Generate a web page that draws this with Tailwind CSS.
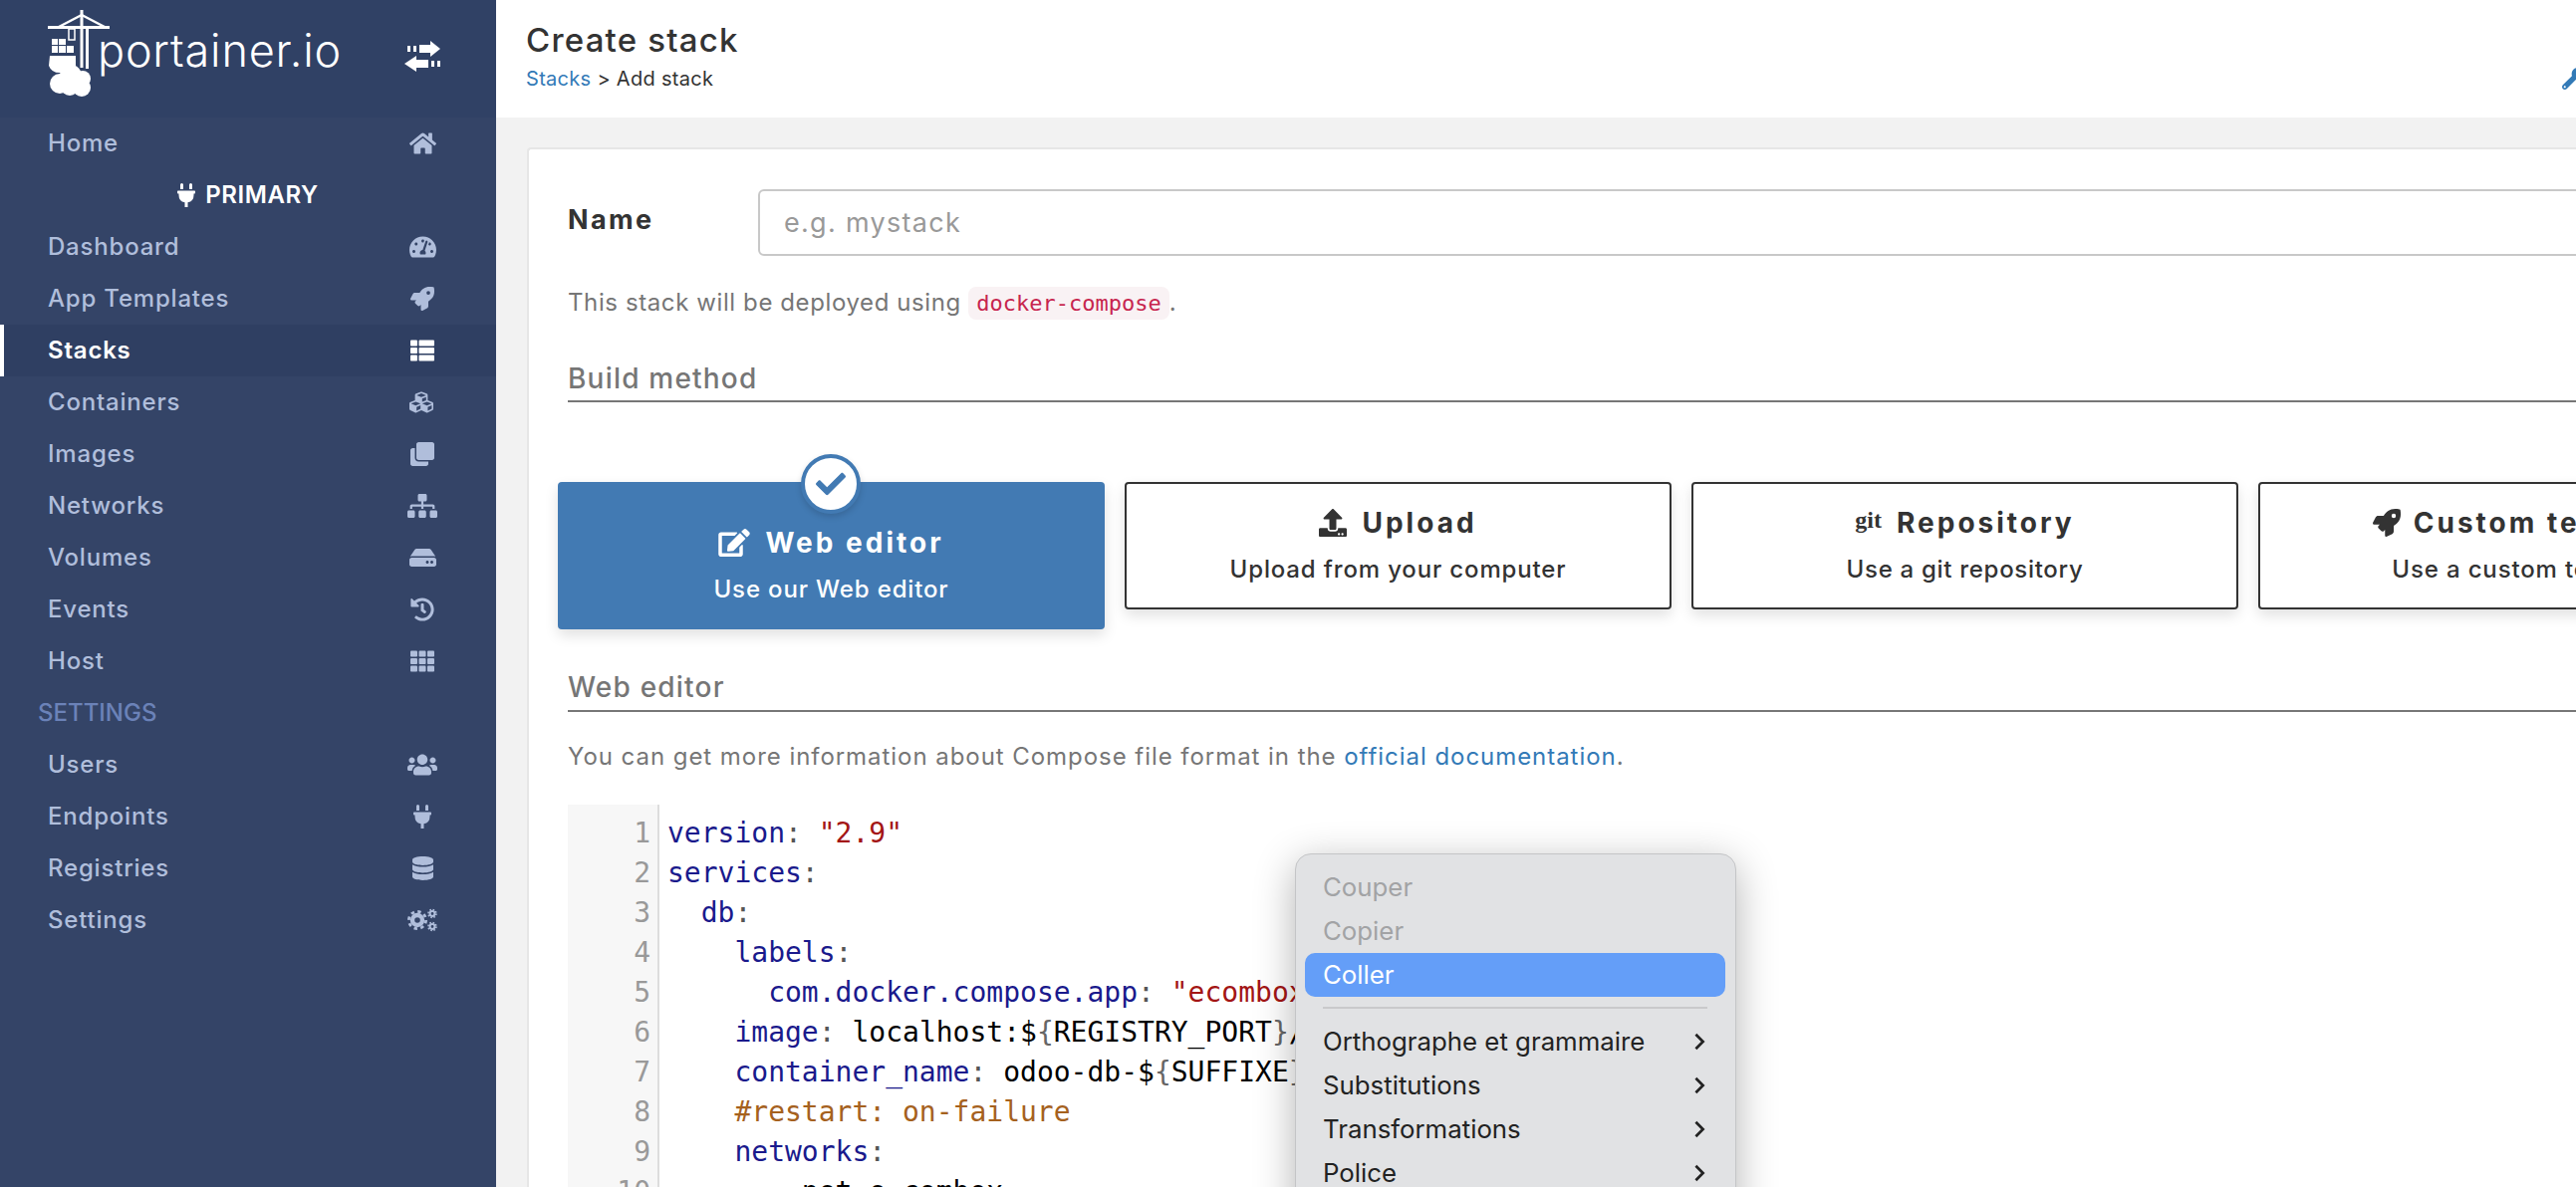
<!DOCTYPE html>
<html>
<head>
  <meta charset="UTF-8">
  <title>Create stack</title>
  <script src="https://cdn.jsdelivr.net/npm/@tailwindcss/browser@4"></script>
</head>
<body class="bg-[#f2f2f2]">
<div class="relative flex w-[2586px] h-[1192px] overflow-hidden font-['Inter',sans-serif]">

  <!-- sidebar -->
  <aside class="w-[498px] shrink-0 bg-[#344467] text-[#b0bedb] text-[24px] font-medium tracking-[0.8px]">
    <div class="flex h-[118px] bg-[#304165] text-white">
      <svg class="w-[70px] h-[100px] ml-[44px] shrink-0" viewBox="44 0 70 100" fill="#fff">
        <rect x="80.5" y="10" width="3" height="58"/>
        <rect x="86" y="27" width="3" height="42"/>
        <rect x="48" y="26" width="62" height="3"/>
        <path d="M82 15 L59 27 M82 15 L105 27" stroke="#fff" stroke-width="2.5"/>
        <rect x="69" y="29" width="6" height="11" fill="none" stroke="#fff" stroke-width="1.5"/>
        <path d="M52 39h6v6h-6zM59 39h7v6h-7zM52 46h6v7h-6zM59 46h7v7h-7zM67 46h7v7h-7z"/>
        <path d="M50 56 H76 V66 Q70 72 62 73 Q52 74 49 66 Z"/>
        <circle cx="60" cy="84" r="10"/><circle cx="71" cy="76" r="11"/><circle cx="83" cy="79" r="8"/><circle cx="82" cy="88" r="9"/><circle cx="70" cy="87" r="9"/>
      </svg>
      <span class="mt-[21px] -ml-[16px] text-[45px] leading-[60px] font-light tracking-[0.8px]">portainer.io</span>
      <svg class="w-[36px] h-[32px] ml-auto mr-[56px] mt-[40px]" viewBox="0 0 36 32" fill="#fff">
        <rect x="3" y="6" width="3" height="6"/><rect x="9" y="6" width="3" height="6"/><path d="M15 5H26V1L36 9L26 17V13H15Z"/>
        <rect x="33" y="21" width="3" height="6"/><rect x="27" y="21" width="3" height="6"/><path d="M24 20H12V16L0 24L12 32V28H24Z"/>
      </svg>
    </div>

    <nav>
      <a class="flex items-center h-[52px] pl-[48px] pr-[50px] justify-between"><span>Home</span>
        <span class="flex justify-center w-[48px]"><svg class="w-[27px] h-[24px] fill-current" viewBox="0 0 576 512"><path d="M280.37 148.26L96 300.11V464a16 16 0 0 0 16 16l112.06-.29a16 16 0 0 0 15.92-16V368a16 16 0 0 1 16-16h64a16 16 0 0 1 16 16v95.64a16 16 0 0 0 16 16.05L464 480a16 16 0 0 0 16-16V300L295.67 148.26a12.19 12.19 0 0 0-15.3 0zM571.6 251.47L488 182.56V44.05a12 12 0 0 0-12-12h-56a12 12 0 0 0-12 12v72.61L318.47 43a48 48 0 0 0-61 0L4.34 251.47a12 12 0 0 0-1.6 16.9l25.5 31A12 12 0 0 0 45.15 301l235.22-193.74a12.19 12.19 0 0 1 15.3 0L530.9 301a12 12 0 0 0 16.9-1.6l25.5-31a12 12 0 0 0-1.7-16.93z"/></svg></span></a>
      <div class="flex items-center justify-center h-[52px] gap-[10px] text-white font-semibold tracking-[0.6px]">
        <svg class="w-[18px] h-[24px] fill-current" viewBox="0 0 384 512"><path d="M320,32a32,32,0,0,0-64,0v96h64Zm48,128H16A16,16,0,0,0,0,176v32a16,16,0,0,0,16,16H32v32A160.07,160.07,0,0,0,160,412.8V512h64V412.8A160.07,160.07,0,0,0,352,256V224h16a16,16,0,0,0,16-16V176A16,16,0,0,0,368,160ZM128,32a32,32,0,0,0-64,0v96h64Z"/></svg>
        <span>PRIMARY</span>
      </div>
      <a class="flex items-center h-[52px] pl-[48px] pr-[50px] justify-between"><span>Dashboard</span>
        <span class="flex justify-center w-[48px]"><svg class="w-[27px] h-[24px] fill-current" viewBox="0 0 576 512"><path d="M288 32C128.94 32 0 160.94 0 320c0 52.8 14.25 102.26 39.06 144.8 5.61 9.62 16.3 15.2 27.44 15.2h443c11.14 0 21.83-5.58 27.44-15.2C561.75 422.26 576 372.8 576 320c0-159.06-128.94-288-288-288zm0 64c14.71 0 26.58 10.13 30.32 23.65-1.11 2.26-2.64 4.23-3.45 6.67l-9.22 27.67c-5.13 3.49-10.97 6.01-17.64 6.01-17.67 0-32-14.33-32-32S270.33 96 288 96zM96 384c-17.67 0-32-14.33-32-32s14.33-32 32-32 32 14.33 32 32-14.33 32-32 32zm48-160c-17.67 0-32-14.33-32-32s14.33-32 32-32 32 14.33 32 32-14.33 32-32 32zm246.77-72.41l-61.33 184C343.13 347.33 352 364.54 352 384c0 11.72-3.38 22.55-8.88 32H232.88c-5.5-9.45-8.88-20.28-8.88-32 0-33.94 26.5-61.43 59.9-63.59l61.34-184.01c4.17-12.56 17.73-19.45 30.36-15.17 12.57 4.19 19.35 17.79 15.17 30.36zm14.66 57.2l15.52-46.55c3.47-1.29 7.13-2.23 11.05-2.23 17.67 0 32 14.33 32 32s-14.33 32-32 32c-11.38-.01-20.89-6.28-26.57-15.22zM480 384c-17.67 0-32-14.33-32-32s14.33-32 32-32 32 14.33 32 32-14.33 32-32 32z"/></svg></span></a>
      <a class="flex items-center h-[52px] pl-[48px] pr-[50px] justify-between"><span>App Templates</span>
        <span class="flex justify-center w-[48px]"><svg class="w-[24px] h-[24px] fill-current" viewBox="0 0 512 512"><path d="M505.12019,19.09375c-1.18945-5.53125-6.65819-11-12.207-12.1875C460.716,0,435.507,0,410.40747,0,307.17523,0,245.26909,55.20312,199.05238,128H94.83772c-16.34763.01562-35.55658,11.875-42.88664,26.48438L2.51562,253.29688A28.4,28.4,0,0,0,0,264a24.00867,24.00867,0,0,0,24.00582,24H127.81618l-22.47457,22.46875c-11.36521,11.36133-12.99607,32.25781,0,45.25L156.24582,406.625c11.15623,11.1875,32.15619,13.15625,45.27726,0l22.47457-22.46875V488a24.00867,24.00867,0,0,0,24.00581,24,28.55934,28.55934,0,0,0,10.707-2.51562l98.72834-49.39063c14.62888-7.29687,26.50776-26.5,26.50776-42.85937V312.79688c72.59753-46.3125,128.03493-108.40626,128.03493-211.09376C512.07526,76.5,512.07526,51.29688,505.12019,19.09375ZM384.04033,168A40,40,0,1,1,424.05,128,40.02322,40.02322,0,0,1,384.04033,168Z"/></svg></span></a>
      <a class="flex items-center h-[52px] pl-[44px] pr-[50px] justify-between border-l-4 border-white bg-[#2f3f62] text-white font-semibold"><span>Stacks</span>
        <span class="flex justify-center w-[48px]"><svg class="w-[24px] h-[24px] fill-current" viewBox="0 0 512 512"><path d="M149.333 216v80c0 13.255-10.745 24-24 24H24c-13.255 0-24-10.745-24-24v-80c0-13.255 10.745-24 24-24h101.333c13.255 0 24 10.745 24 24zM0 376v80c0 13.255 10.745 24 24 24h101.333c13.255 0 24-10.745 24-24v-80c0-13.255-10.745-24-24-24H24c-13.255 0-24 10.745-24 24zM125.333 32H24C10.745 32 0 42.745 0 56v80c0 13.255 10.745 24 24 24h101.333c13.255 0 24-10.745 24-24V56c0-13.255-10.745-24-24-24zm80 448H488c13.255 0 24-10.745 24-24v-80c0-13.255-10.745-24-24-24H205.333c-13.255 0-24 10.745-24 24v80c0 13.255 10.745 24 24 24zm-24-424v80c0 13.255 10.745 24 24 24H488c13.255 0 24-10.745 24-24V56c0-13.255-10.745-24-24-24H205.333c-13.255 0-24 10.745-24 24zm24 264H488c13.255 0 24-10.745 24-24v-80c0-13.255-10.745-24-24-24H205.333c-13.255 0-24 10.745-24 24v80c0 13.255 10.745 24 24 24z"/></svg></span></a>
      <a class="flex items-center h-[52px] pl-[48px] pr-[50px] justify-between"><span>Containers</span>
        <span class="flex justify-center w-[48px]"><svg class="w-[27px] h-[24px] fill-current" viewBox="0 0 576 512"><path d="M488.6 250.2L392 214V105.5c0-15-9.3-28.4-23.4-33.7l-100-37.5c-8.1-3.1-17.1-3.1-25.3 0l-100 37.5c-14.1 5.3-23.4 18.7-23.4 33.7V214l-96.6 36.2C9.3 255.5 0 268.9 0 283.9V394c0 13.6 7.7 26.1 19.9 32.2l100 50c10.1 5.1 22.1 5.1 32.2 0l103.9-52 103.9 52c10.1 5.1 22.1 5.1 32.2 0l100-50c12.2-6.1 19.9-18.6 19.9-32.2V283.9c0-15-9.3-28.4-23.4-33.7zM358 214.8l-85 31.9v-68.2l85-37v73.3zM154 104.1l102-38.2 102 38.2v.6l-102 41.4-102-41.4v-.6zm84 291.1l-85 42.5v-79.1l85-38.8v75.4zm0-112l-102 41.4-102-41.4v-.6l102-38.2 102 38.2v.6zm240 112l-85 42.5v-79.1l85-38.8v75.4zm0-112l-102 41.4-102-41.4v-.6l102-38.2 102 38.2v.6z"/></svg></span></a>
      <a class="flex items-center h-[52px] pl-[48px] pr-[50px] justify-between"><span>Images</span>
        <span class="flex justify-center w-[48px]"><svg class="w-[24px] h-[24px] fill-current" viewBox="0 0 512 512"><path d="M464 0c26.51 0 48 21.49 48 48v288c0 26.51-21.49 48-48 48H176c-26.51 0-48-21.49-48-48V48c0-26.51 21.49-48 48-48h288M176 416c-44.112 0-80-35.888-80-80V128H48c-26.51 0-48 21.49-48 48v288c0 26.51 21.49 48 48 48h288c26.51 0 48-21.49 48-48v-48H176z"/></svg></span></a>
      <a class="flex items-center h-[52px] pl-[48px] pr-[50px] justify-between"><span>Networks</span>
        <span class="flex justify-center w-[48px]"><svg class="w-[30px] h-[24px] fill-current" viewBox="0 0 640 512"><path d="M128 352H32c-17.67 0-32 14.33-32 32v96c0 17.67 14.33 32 32 32h96c17.67 0 32-14.33 32-32v-96c0-17.67-14.33-32-32-32zm-24-80h192v48h48v-48h192v48h48v-57.59c0-21.17-17.23-38.41-38.41-38.41H344v-64h40c17.67 0 32-14.33 32-32V32c0-17.67-14.33-32-32-32H256c-17.67 0-32 14.33-32 32v96c0 17.67 14.33 32 32 32h40v64H94.41C73.23 224 56 241.23 56 262.41V320h48v-48zm264 80h-96c-17.67 0-32 14.33-32 32v96c0 17.67 14.33 32 32 32h96c17.67 0 32-14.33 32-32v-96c0-17.67-14.33-32-32-32zm240 0h-96c-17.67 0-32 14.33-32 32v96c0 17.67 14.33 32 32 32h96c17.67 0 32-14.33 32-32v-96c0-17.67-14.33-32-32-32z"/></svg></span></a>
      <a class="flex items-center h-[52px] pl-[48px] pr-[50px] justify-between"><span>Volumes</span>
        <span class="flex justify-center w-[48px]"><svg class="w-[27px] h-[24px] fill-current" viewBox="0 0 576 512"><path d="M576 304v96c0 26.51-21.49 48-48 48H48c-26.51 0-48-21.49-48-48v-96c0-26.51 21.49-48 48-48h480c26.51 0 48 21.49 48 48zm-48-80a79.557 79.557 0 0 1 30.777 6.165L462.25 85.374A48.003 48.003 0 0 0 422.311 64H153.689a48 48 0 0 0-39.938 21.374L17.223 230.165A79.557 79.557 0 0 1 48 224h480zm-48 96c-17.673 0-32 14.327-32 32s14.327 32 32 32 32-14.327 32-32-14.327-32-32-32zm-96 0c-17.673 0-32 14.327-32 32s14.327 32 32 32 32-14.327 32-32-14.327-32-32-32z"/></svg></span></a>
      <a class="flex items-center h-[52px] pl-[48px] pr-[50px] justify-between"><span>Events</span>
        <span class="flex justify-center w-[48px]"><svg class="w-[24px] h-[24px] fill-current" viewBox="0 0 512 512"><path d="M504 255.531c.253 136.64-111.18 248.372-247.82 248.468-59.015.042-113.223-20.53-155.822-54.911-11.077-8.94-11.905-25.541-1.839-35.607l11.267-11.267c8.609-8.609 22.353-9.551 31.891-1.984C173.062 425.135 212.781 440 256 440c101.705 0 184-82.311 184-184 0-101.705-82.311-184-184-184-48.814 0-93.149 18.969-126.068 49.932l50.754 50.754c10.08 10.08 2.941 27.314-11.313 27.314H24c-8.837 0-16-7.163-16-16V38.627c0-14.254 17.234-21.393 27.314-11.314l49.372 49.372C129.209 34.136 189.552 8 256 8c136.81 0 247.747 110.78 248 247.531zm-180.912 78.784l9.823-12.63c8.138-10.463 6.253-25.542-4.21-33.679L288 256.349V152c0-13.255-10.745-24-24-24h-16c-13.255 0-24 10.745-24 24v135.651l65.409 50.874c10.463 8.137 25.541 6.253 33.679-4.21z"/></svg></span></a>
      <a class="flex items-center h-[52px] pl-[48px] pr-[50px] justify-between"><span>Host</span>
        <span class="flex justify-center w-[48px]"><svg class="w-[24px] h-[24px] fill-current" viewBox="0 0 512 512"><path d="M149.333 56v80c0 13.255-10.745 24-24 24H24c-13.255 0-24-10.745-24-24V56c0-13.255 10.745-24 24-24h101.333c13.255 0 24 10.745 24 24zm181.334 240v-80c0-13.255-10.745-24-24-24H205.333c-13.255 0-24 10.745-24 24v80c0 13.255 10.745 24 24 24h101.333c13.256 0 24.001-10.745 24.001-24zm32-240v80c0 13.255 10.745 24 24 24H488c13.255 0 24-10.745 24-24V56c0-13.255-10.745-24-24-24H386.667c-13.255 0-24 10.745-24 24zm-32 80V56c0-13.255-10.745-24-24-24H205.333c-13.255 0-24 10.745-24 24v80c0 13.255 10.745 24 24 24h101.333c13.256 0 24.001-10.745 24.001-24zm-205.334 56H24c-13.255 0-24 10.745-24 24v80c0 13.255 10.745 24 24 24h101.333c13.255 0 24-10.745 24-24v-80c0-13.255-10.745-24-24-24zM0 376v80c0 13.255 10.745 24 24 24h101.333c13.255 0 24-10.745 24-24v-80c0-13.255-10.745-24-24-24H24c-13.255 0-24 10.745-24 24zm386.667-56H488c13.255 0 24-10.745 24-24v-80c0-13.255-10.745-24-24-24H386.667c-13.255 0-24 10.745-24 24v80c0 13.255 10.745 24 24 24zm0 160H488c13.255 0 24-10.745 24-24v-80c0-13.255-10.745-24-24-24H386.667c-13.255 0-24 10.745-24 24v80c0 13.255 10.745 24 24 24zM181.333 376v80c0 13.255 10.745 24 24 24h101.333c13.255 0 24-10.745 24-24v-80c0-13.255-10.745-24-24-24H205.333c-13.255 0-24 10.745-24 24z"/></svg></span></a>
      <div class="flex items-center h-[52px] pl-[38px] text-[#6b82b8] tracking-normal">SETTINGS</div>
      <a class="flex items-center h-[52px] pl-[48px] pr-[50px] justify-between"><span>Users</span>
        <span class="flex justify-center w-[48px]"><svg class="w-[30px] h-[24px] fill-current" viewBox="0 0 640 512"><path d="M96 224c35.3 0 64-28.7 64-64s-28.7-64-64-64-64 28.7-64 64 28.7 64 64 64zm448 0c35.3 0 64-28.7 64-64s-28.7-64-64-64-64 28.7-64 64 28.7 64 64 64zm32 32h-64c-17.6 0-33.5 7.1-45.1 18.6 40.3 22.1 68.9 62 75.1 109.4h66c17.7 0 32-14.3 32-32v-32c0-35.3-28.7-64-64-64zm-256 0c61.9 0 112-50.1 112-112S381.9 32 320 32 208 82.1 208 144s50.1 112 112 112zm76.8 32h-8.3c-20.8 10-43.9 16-68.5 16s-47.6-6-68.5-16h-8.3C179.6 288 128 339.6 128 403.2V432c0 26.5 21.5 48 48 48h288c26.5 0 48-21.5 48-48v-28.8c0-63.6-51.6-115.2-115.2-115.2zm-223.7-13.4C161.5 263.1 145.6 256 128 256H64c-35.3 0-64 28.7-64 64v32c0 17.7 14.3 32 32 32h65.9c6.3-47.4 34.9-87.3 75.2-109.4z"/></svg></span></a>
      <a class="flex items-center h-[52px] pl-[48px] pr-[50px] justify-between"><span>Endpoints</span>
        <span class="flex justify-center w-[48px]"><svg class="w-[18px] h-[24px] fill-current" viewBox="0 0 384 512"><path d="M320,32a32,32,0,0,0-64,0v96h64Zm48,128H16A16,16,0,0,0,0,176v32a16,16,0,0,0,16,16H32v32A160.07,160.07,0,0,0,160,412.8V512h64V412.8A160.07,160.07,0,0,0,352,256V224h16a16,16,0,0,0,16-16V176A16,16,0,0,0,368,160ZM128,32a32,32,0,0,0-64,0v96h64Z"/></svg></span></a>
      <a class="flex items-center h-[52px] pl-[48px] pr-[50px] justify-between"><span>Registries</span>
        <span class="flex justify-center w-[48px]"><svg class="w-[21px] h-[24px] fill-current" viewBox="0 0 448 512"><path d="M448 73.143v45.714C448 159.143 347.667 192 224 192S0 159.143 0 118.857V73.143C0 32.857 100.333 0 224 0s224 32.857 224 73.143zM448 176v102.857C448 319.143 347.667 352 224 352S0 319.143 0 278.857V176c48.125 33.143 136.208 48.572 224 48.572S399.874 209.143 448 176zm0 160v102.857C448 479.143 347.667 512 224 512S0 479.143 0 438.857V336c48.125 33.143 136.208 48.572 224 48.572S399.874 369.143 448 336z"/></svg></span></a>
      <a class="flex items-center h-[52px] pl-[48px] pr-[50px] justify-between"><span>Settings</span>
        <span class="flex justify-center w-[48px]"><svg class="w-[30px] h-[24px]" viewBox="0 0 30 24" fill="none" stroke="currentColor">
          <circle cx="10" cy="12" r="5" stroke-width="4.4"/><circle cx="10" cy="12" r="8.6" stroke-width="2.8" stroke-dasharray="3.4 3.35"/>
          <circle cx="25" cy="5.5" r="2.4" stroke-width="2"/><circle cx="25" cy="5.5" r="4" stroke-width="1.6" stroke-dasharray="1.6 1.54"/>
          <circle cx="25" cy="18.5" r="2.4" stroke-width="2"/><circle cx="25" cy="18.5" r="4" stroke-width="1.6" stroke-dasharray="1.6 1.54"/>
        </svg></span></a>
    </nav>
  </aside>

  <!-- main -->
  <main class="flex-1 min-w-0 text-[#333]">
    <header class="flex h-[118px] bg-white pl-[30px]">
      <div class="pt-[18px]">
        <h1 class="text-[33px] leading-[44px] font-medium tracking-[1.2px]">Create stack</h1>
        <p class="mt-[3px] text-[20px] leading-[28px] tracking-[0.3px]"><a class="text-[#337ab7]">Stacks</a> &gt; Add stack</p>
      </div>
      <svg class="w-[22px] h-[22px] ml-auto -mr-[8px] mt-[68px] text-[#337ab7] fill-current" viewBox="0 0 512 512"><path d="M507.73 109.1c-2.24-9.03-13.54-12.09-20.12-5.51l-74.36 74.36-67.88-11.31-11.31-67.88 74.36-74.36c6.62-6.62 3.43-17.9-5.66-20.16-47.38-11.74-99.55.91-136.58 37.93-39.64 39.64-50.55 97.1-34.05 147.2L18.74 402.76c-24.99 24.99-24.99 65.51 0 90.5 24.99 24.99 65.51 24.99 90.5 0l213.21-213.21c50.12 16.71 107.47 5.68 147.37-34.22 37.07-37.07 49.7-89.32 37.91-136.73zM64 472c-13.25 0-24-10.75-24-24 0-13.26 10.75-24 24-24s24 10.74 24 24c0 13.25-10.75 24-24 24z"/></svg>
    </header>

    <section class="ml-[31px] mt-[30px] w-[2400px] h-[1100px] bg-white border-t-2 border-l-2 border-[#e6e6e6] rounded-tl-[4px] pl-[39px] pt-[40px]">
      <div class="flex items-center h-[67px]">
        <label class="w-[191px] text-[27px] font-bold tracking-[2.4px] -mt-[4px]">Name</label>
        <input class="flex-1 h-[67px] border-2 border-[#c8c8c8] rounded-[6px] px-[24px] text-[27px] tracking-[1.3px] placeholder:text-[#999]" placeholder="e.g. mystack">
      </div>
      <p class="mt-[30px] h-[34px] leading-[34px] text-[24px] tracking-[0.6px] text-[#767676]">This stack will be deployed using <code class="px-[8px] py-[4px] rounded-[8px] bg-[#f9f2f4] text-[#c7254e] text-[22px] tracking-normal font-['DejaVu_Sans_Mono',monospace]">docker-compose</code>.</p>

      <div class="mt-[39px] h-[44px] leading-[40px] border-b-2 border-[#777] text-[28px] tracking-[1.2px] font-medium text-[#767676]">Build method</div>

      <div class="flex items-start gap-[20px] mt-[80px] -ml-[10px]">
        <div class="relative flex flex-col items-center w-[549px] h-[148px] pt-[41px] rounded-[4px] bg-[#427ab3] text-white shadow-[0_6px_14px_rgba(0,0,0,0.12)]">
          <span class="absolute -top-[28px] left-[244px] flex items-center justify-center w-[60px] h-[60px] rounded-full bg-white border-4 border-[#427ab3] shadow-[0_3px_6px_rgba(0,0,0,0.15)]">
            <svg class="w-[30px] h-[30px] text-[#427ab3] fill-current" viewBox="0 0 512 512"><path d="M173.898 439.404l-166.4-166.4c-9.997-9.997-9.997-26.206 0-36.204l36.203-36.204c9.997-9.998 26.207-9.998 36.204 0L192 312.69 432.095 72.596c9.997-9.997 26.207-9.997 36.204 0l36.203 36.204c9.997 9.997 9.997 26.206 0 36.204l-294.4 294.401c-9.998 9.997-26.207 9.997-36.204-.001z"/></svg>
          </span>
          <div class="flex items-center gap-[15px] h-[40px] text-[28px] font-bold tracking-[3px]">
            <svg class="w-[32px] h-[28px] fill-current" viewBox="0 0 576 512"><path d="M402.6 83.2l90.2 90.2c3.8 3.8 3.8 10 0 13.8L274.4 405.6l-92.8 10.3c-12.4 1.4-22.9-9.1-21.5-21.5l10.3-92.8L388.8 83.2c3.8-3.8 10-3.8 13.8 0zm162-22.9l-48.8-48.8c-15.2-15.2-39.9-15.2-55.2 0l-35.4 35.4c-3.8 3.8-3.8 10 0 13.8l90.2 90.2c3.8 3.8 10 3.8 13.8 0l35.4-35.4c15.2-15.3 15.2-40 0-55.2zM384 346.2V448H64V128h229.8c3.2 0 6.2-1.3 8.5-3.5l40-40c7.6-7.6 2.2-20.5-8.5-20.5H48C21.5 64 0 85.5 0 112v352c0 26.5 21.5 48 48 48h352c26.5 0 48-21.5 48-48V306.2c0-10.7-12.9-16-20.5-8.5l-40 40c-2.2 2.3-3.5 5.3-3.5 8.5z"/></svg>
            Web editor
          </div>
          <div class="mt-[11px] h-[32px] leading-[32px] text-[24px] font-medium tracking-[0.85px]">Use our Web editor</div>
        </div>

        <div class="flex flex-col items-center w-[549px] h-[128px] pt-[19px] shrink-0 rounded-[4px] border-2 border-[#333] bg-white shadow-[0_6px_14px_rgba(0,0,0,0.12)]">
          <div class="flex items-center gap-[15px] h-[40px] text-[28px] font-bold tracking-[3px]">
            <svg class="w-[28px] h-[28px] fill-current" viewBox="0 0 512 512"><path d="M296 384h-80c-13.3 0-24-10.7-24-24V192h-87.7c-17.8 0-26.7-21.5-14.1-34.1L242.3 5.7c7.5-7.5 19.8-7.5 27.3 0l152.2 152.2c12.6 12.6 3.7 34.1-14.1 34.1H320v168c0 13.3-10.7 24-24 24zm216-8v112c0 13.3-10.7 24-24 24H24c-13.3 0-24-10.7-24-24V376c0-13.3 10.7-24 24-24h136v8c0 30.9 25.1 56 56 56h80c30.9 0 56-25.1 56-56v-8h136c13.3 0 24 10.7 24 24zm-124 88c0-11-9-20-20-20s-20 9-20 20 9 20 20 20 20-9 20-20zm64 0c0-11-9-20-20-20s-20 9-20 20 9 20 20 20 20-9 20-20z"/></svg>
            Upload
          </div>
          <div class="mt-[11px] h-[32px] leading-[32px] text-[24px] font-medium tracking-[0.85px]">Upload from your computer</div>
        </div>

        <div class="flex flex-col items-center w-[549px] h-[128px] pt-[19px] shrink-0 rounded-[4px] border-2 border-[#333] bg-white shadow-[0_6px_14px_rgba(0,0,0,0.12)]">
          <div class="flex items-center gap-[15px] h-[40px] text-[28px] font-bold tracking-[3px]">
            <span class="-mt-[6px] text-[24px] leading-none tracking-normal font-bold font-['Liberation_Serif',serif]">git</span>
            Repository
          </div>
          <div class="mt-[11px] h-[32px] leading-[32px] text-[24px] font-medium tracking-[0.7px]">Use a git repository</div>
        </div>

        <div class="flex flex-col items-center w-[549px] h-[128px] pt-[19px] shrink-0 rounded-[4px] border-2 border-[#333] bg-white shadow-[0_6px_14px_rgba(0,0,0,0.12)]">
          <div class="flex items-center gap-[13px] h-[40px] text-[28px] font-bold tracking-[3px]">
            <svg class="w-[28px] h-[28px] fill-current" viewBox="0 0 512 512"><path d="M505.12019,19.09375c-1.18945-5.53125-6.65819-11-12.207-12.1875C460.716,0,435.507,0,410.40747,0,307.17523,0,245.26909,55.20312,199.05238,128H94.83772c-16.34763.01562-35.55658,11.875-42.88664,26.48438L2.51562,253.29688A28.4,28.4,0,0,0,0,264a24.00867,24.00867,0,0,0,24.00582,24H127.81618l-22.47457,22.46875c-11.36521,11.36133-12.99607,32.25781,0,45.25L156.24582,406.625c11.15623,11.1875,32.15619,13.15625,45.27726,0l22.47457-22.46875V488a24.00867,24.00867,0,0,0,24.00581,24,28.55934,28.55934,0,0,0,10.707-2.51562l98.72834-49.39063c14.62888-7.29687,26.50776-26.5,26.50776-42.85937V312.79688c72.59753-46.3125,128.03493-108.40626,128.03493-211.09376C512.07526,76.5,512.07526,51.29688,505.12019,19.09375ZM384.04033,168A40,40,0,1,1,424.05,128,40.02322,40.02322,0,0,1,384.04033,168Z"/></svg>
            Custom template
          </div>
          <div class="mt-[11px] h-[32px] leading-[32px] text-[24px] font-medium tracking-[0.85px]">Use a custom template</div>
        </div>
      </div>

      <div class="mt-[38px] h-[45px] leading-[40px] border-b-2 border-[#777] text-[28px] tracking-[1.2px] font-medium text-[#767676]">Web editor</div>
      <p class="mt-[28px] h-[34px] leading-[34px] text-[24px] tracking-[0.95px] text-[#767676]">You can get more information about Compose file format in the <a class="text-[#337ab7]">official documentation</a>.</p>

      <!-- code editor -->
      <div class="mt-[31px] flex text-[28px] leading-[40px] font-['DejaVu_Sans_Mono',monospace]">
        <div class="w-[92px] pt-[9px] pb-[40px] pr-[7px] bg-[#f7f7f7] border-r-2 border-[#ddd] text-right text-[#999]">
          <div>1</div><div>2</div><div>3</div><div>4</div><div>5</div><div>6</div><div>7</div><div>8</div><div>9</div><div>10</div>
        </div>
        <div class="pl-[8px] pt-[9px] text-black *:whitespace-pre">
          <div><span class="text-[#1a1a8c]">version</span><span class="text-[#555]">:</span> <span class="text-[#a31515]">"2.9"</span></div>
          <div><span class="text-[#1a1a8c]">services</span><span class="text-[#555]">:</span></div>
          <div>  <span class="text-[#1a1a8c]">db</span><span class="text-[#555]">:</span></div>
          <div>    <span class="text-[#1a1a8c]">labels</span><span class="text-[#555]">:</span></div>
          <div>      <span class="text-[#1a1a8c]">com.docker.compose.app</span><span class="text-[#555]">:</span> <span class="text-[#a31515]">"ecombox"</span></div>
          <div>    <span class="text-[#1a1a8c]">image</span><span class="text-[#555]">:</span> localhost:$<span class="text-[#666]">{</span>REGISTRY_PORT<span class="text-[#666]">}</span>/odoo</div>
          <div>    <span class="text-[#1a1a8c]">container_name</span><span class="text-[#555]">:</span> odoo-db-$<span class="text-[#666]">{</span>SUFFIXE<span class="text-[#666]">}</span></div>
          <div class="text-[#a5611e]">    #restart: on-failure</div>
          <div>    <span class="text-[#1a1a8c]">networks</span><span class="text-[#555]">:</span></div>
          <div>      - net-e-combox</div>
        </div>
      </div>
    </section>
  </main>

  <!-- context menu -->
  <div class="absolute left-[1300px] top-[857px] w-[443px] h-[400px] pt-[11px] pl-[9px] pr-[10px] rounded-[16px] bg-[#e1e2e4] border border-[#c4c5c7] shadow-[0_10px_40px_rgba(0,0,0,0.3)] text-[25.8px] text-[#222] font-['Inter',sans-serif]">
    <div class="flex items-center h-[44px] px-[18px] text-[#a2a3a5]">Couper</div>
    <div class="flex items-center h-[44px] px-[18px] text-[#a2a3a5]">Copier</div>
    <div class="flex items-center h-[44px] px-[18px] rounded-[10px] bg-[#649ef8] text-white">Coller</div>
    <div class="h-[2px] mx-[18px] mt-[10px] mb-[11px] bg-[#c9c9cb]"></div>
    <div class="flex items-center justify-between h-[44px] px-[18px]"><span>Orthographe et grammaire</span>
      <svg class="w-[12px] h-[18px] mr-[2px]" viewBox="0 0 12 20" fill="none" stroke="currentColor" stroke-width="3"><path d="M2 2L10 10L2 18"/></svg></div>
    <div class="flex items-center justify-between h-[44px] px-[18px]"><span>Substitutions</span>
      <svg class="w-[12px] h-[18px] mr-[2px]" viewBox="0 0 12 20" fill="none" stroke="currentColor" stroke-width="3"><path d="M2 2L10 10L2 18"/></svg></div>
    <div class="flex items-center justify-between h-[44px] px-[18px]"><span>Transformations</span>
      <svg class="w-[12px] h-[18px] mr-[2px]" viewBox="0 0 12 20" fill="none" stroke="currentColor" stroke-width="3"><path d="M2 2L10 10L2 18"/></svg></div>
    <div class="flex items-center justify-between h-[44px] px-[18px]"><span>Police</span>
      <svg class="w-[12px] h-[18px] mr-[2px]" viewBox="0 0 12 20" fill="none" stroke="currentColor" stroke-width="3"><path d="M2 2L10 10L2 18"/></svg></div>
  </div>
</div>
</body>
</html>
